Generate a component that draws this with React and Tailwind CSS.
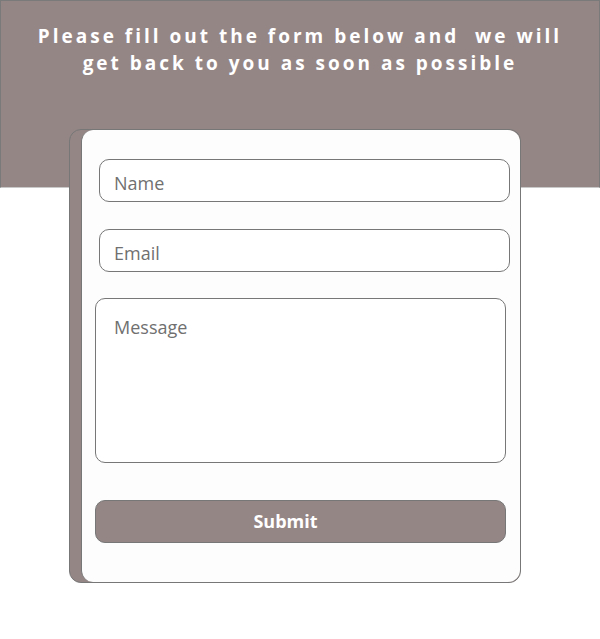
import React from 'react'

export default function App(){
  const font = { fontFamily: '"Open Sans", "Noto Sans", sans-serif' }

  return (
    <div className="min-h-[639px] bg-white" style={font}>
      {/* Header band */}
      <div className="h-[188px] border border-[#7a7a7a] border-b-[#c9c9c9] bg-[#958686] pt-[22px] text-center">
        <p className="text-[19px] font-bold leading-[27px] tracking-[3px] text-white">
          Please fill out the form below and&nbsp; we will<br />get back to you as soon as possible
        </p>
      </div>

      {/* Card */}
      <div className="ml-[69px] -mt-[59px] w-[452px] rounded-[12px] border border-[#777] bg-[#958686] pl-[11px]">
        <div className="flex flex-col rounded-[12px] border-l border-[#777] bg-[#fdfdfd] pt-[29px] pb-[39px] pl-[13px] pr-[13px]">
          <input
            placeholder="Name"
            className="ml-[4px] h-[43px] w-[411px] rounded-[10px] border border-[#777] bg-white px-[14px] pt-[5px] text-[18px] text-[#555] outline-none placeholder:text-[#707070]"
          />
          <input
            placeholder="Email"
            className="mt-[27px] ml-[4px] h-[43px] w-[411px] rounded-[10px] border border-[#777] bg-white px-[14px] pt-[5px] text-[18px] text-[#555] outline-none placeholder:text-[#707070]"
          />
          <textarea
            placeholder="Message"
            className="mt-[26px] h-[165px] w-[411px] resize-none rounded-[10px] border border-[#777] bg-white px-[18px] pt-[15px] text-[18px] text-[#555] outline-none placeholder:text-[#707070]"
          />
          <button className="mt-[37px] h-[43px] w-[411px] rounded-[10px] border border-[#777] bg-[#958686] pr-[30px] text-[18px] font-bold text-white">
            Submit
          </button>
        </div>
      </div>
    </div>
  )
}
